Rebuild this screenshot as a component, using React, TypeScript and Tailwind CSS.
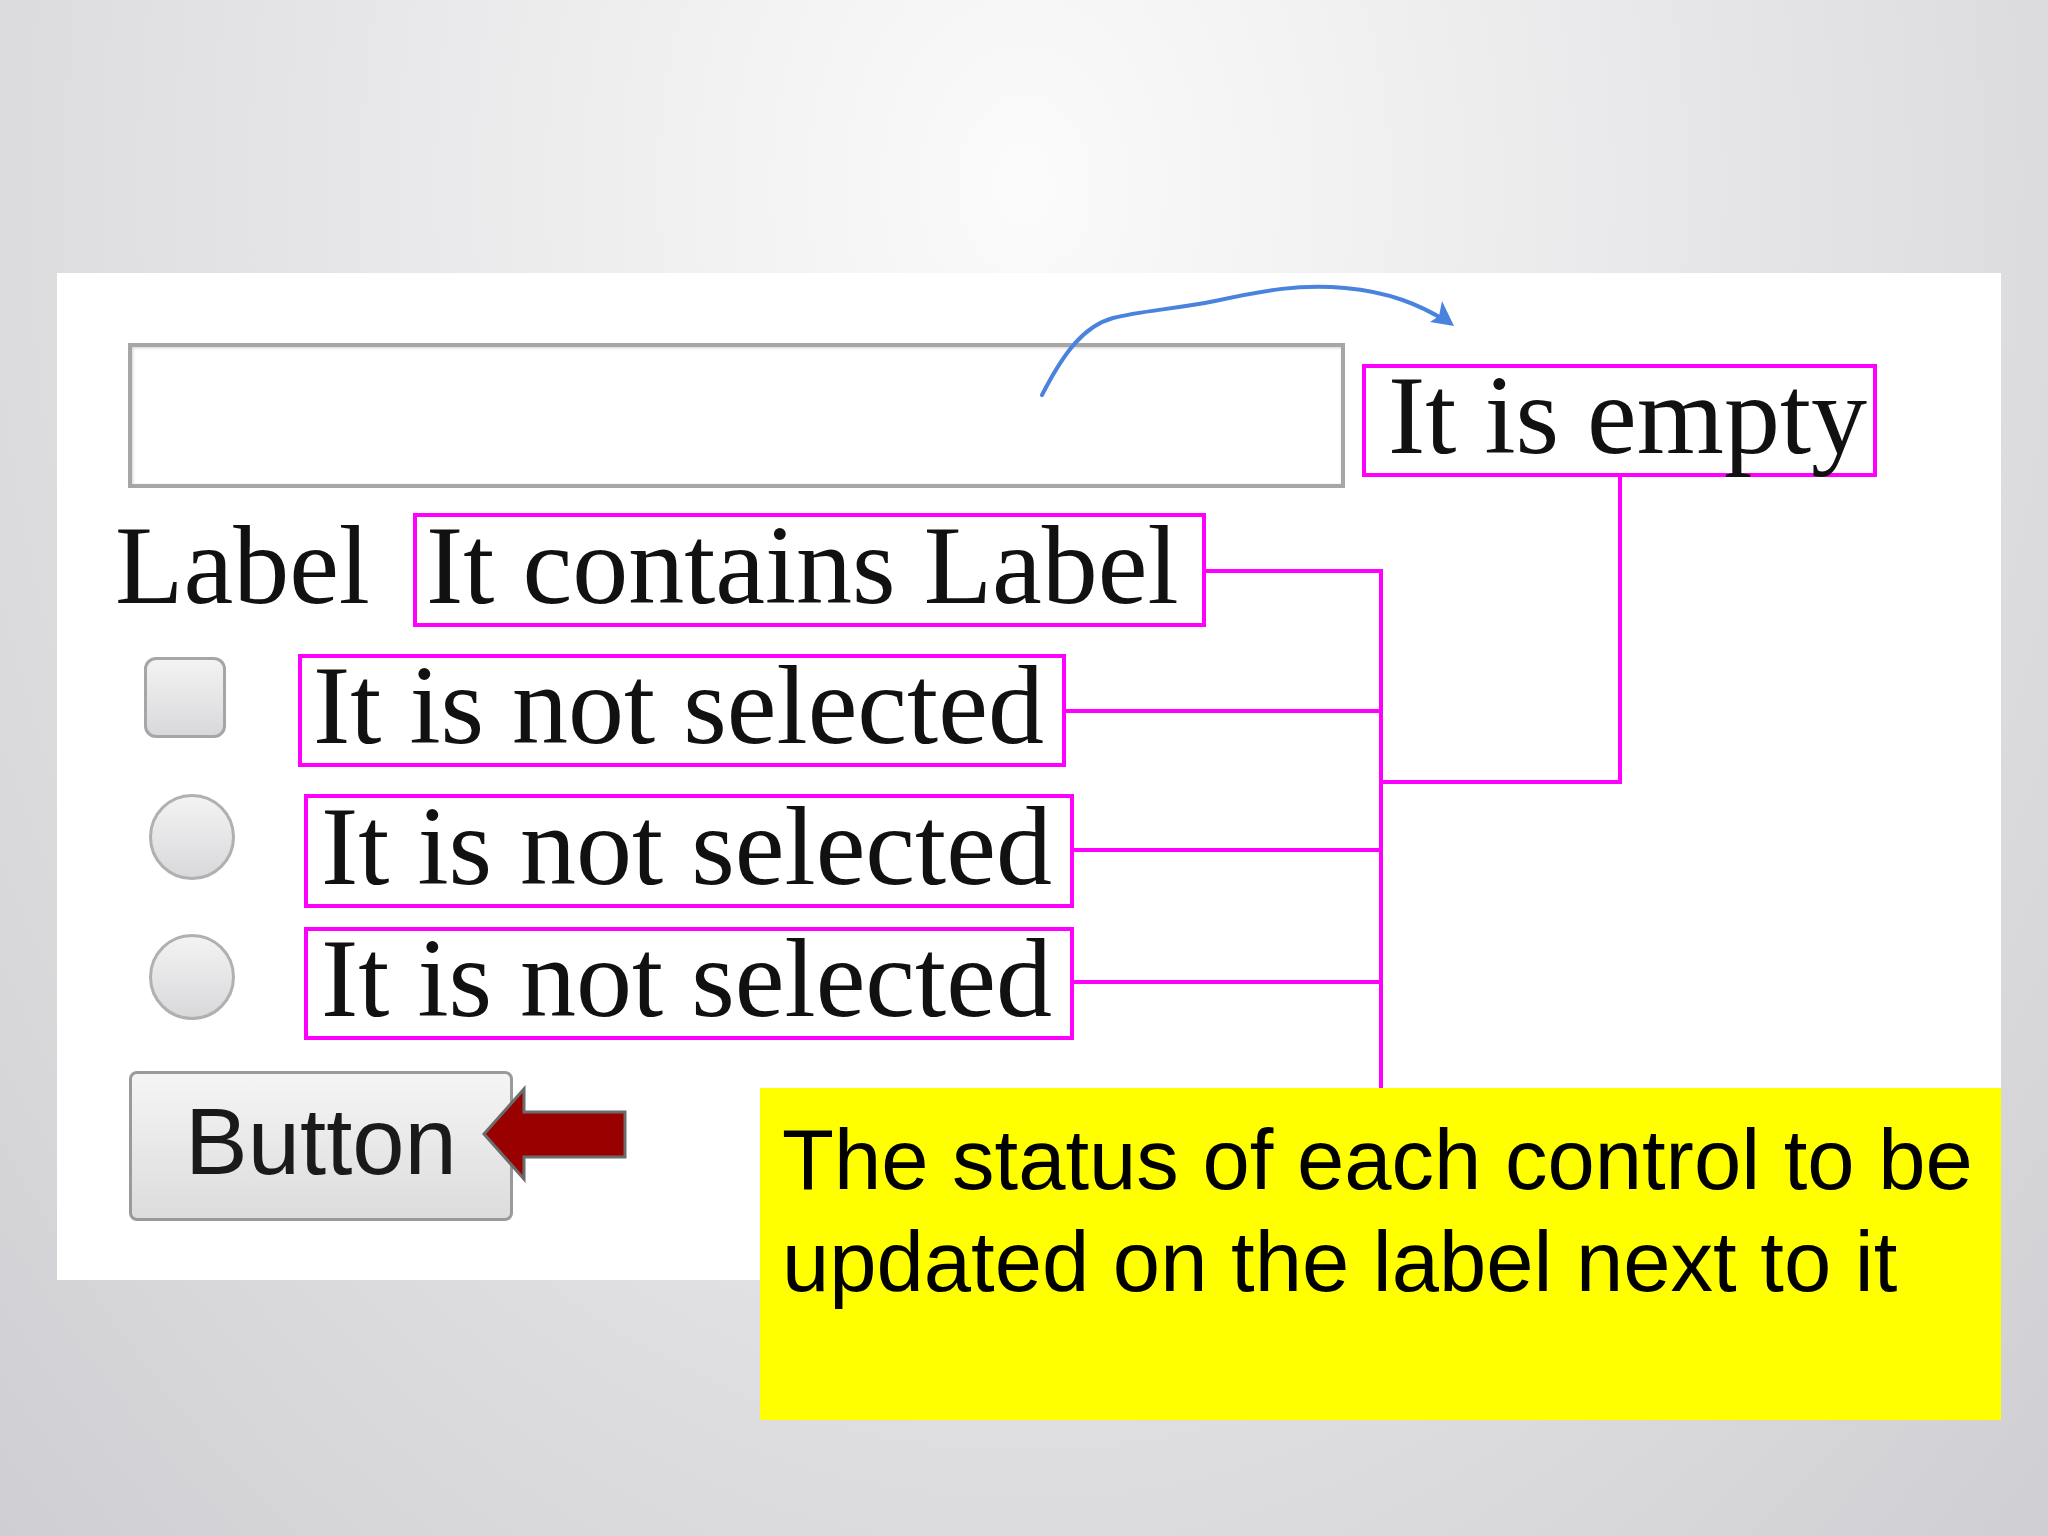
const serif = "font-['Liberation_Serif','Times_New_Roman',serif]"
const sans = "font-['Liberation_Sans',Arial,sans-serif]"

function StatusBox({ text, className }: { text: string; className: string }) {
  return (
    <div className={`flex shrink-0 items-center border-[4px] border-[#ff00ff] ${className}`}>
      <span className={`${serif} -mt-[10px] whitespace-nowrap text-[112px] leading-[107px] text-[#111]`}>{text}</span>
    </div>
  )
}

function Overlay() {
  return (
    <svg className="pointer-events-none absolute left-0 top-0" width="2048" height="1536" viewBox="0 0 2048 1536">
      <g stroke="#ff00ff" strokeWidth="4" fill="none">
        <path d="M1206 571 H1381 V1088" />
        <path d="M1066 711 H1381" />
        <path d="M1074 850 H1381" />
        <path d="M1074 982 H1381" />
        <path d="M1620 477 V782 H1381" />
      </g>
      <path
        d="M1042 395 C1064 352 1084 326 1113 318 C1140 311 1175 309 1215 301 C1265 290 1300 284 1345 288 C1390 292 1420 305 1446 321"
        stroke="#4a83de"
        strokeWidth="4"
        fill="none"
        strokeLinecap="round"
      />
      <polygon points="1454,326 1430,322 1439,316 1442,301" fill="#4a83de" />
      <polygon
        points="484,1134 524,1089 524,1112 625,1112 625,1157 524,1157 524,1179"
        fill="#990000"
        stroke="#6b6b6b"
        strokeWidth="3"
        strokeLinejoin="miter"
      />
    </svg>
  )
}

export default function App() {
  return (
    <div className="relative h-[1536px] w-[2048px] overflow-hidden bg-[radial-gradient(ellipse_at_50%_12%,#fbfbfb_0%,#e6e6e8_48%,#cfcfd3_100%)]">
      <div className="ml-[57px] mt-[273px] flex h-[1007px] w-[1944px] flex-col bg-white">
        {/* text input + status */}
        <div className="mt-[70px] flex items-start">
          <div className="ml-[71px] h-[145px] w-[1217px] shrink-0 border-[4px] border-[#a6a6a6] bg-white shadow-[inset_1px_1px_3px_rgba(0,0,0,0.18)]" />
          <StatusBox text="It is empty" className="ml-[17px] mt-[21px] h-[113px] w-[515px] pl-[22px]" />
        </div>

        {/* label row */}
        <div className="mt-[25px] flex items-center">
          <span className={`${serif} -mt-[10px] ml-[58px] w-[298px] shrink-0 text-[112px] leading-[107px] text-[#111]`}>Label</span>
          <StatusBox text="It contains Label" className="h-[114px] w-[793px] pl-[9px]" />
        </div>

        {/* checkbox */}
        <div className="mt-[27px] flex items-start">
          <div className="ml-[87px] mt-[3px] h-[81px] w-[82px] shrink-0 rounded-[12px] border-[3px] border-[#a6a6a6] bg-gradient-to-b from-[#f3f3f3] to-[#d9d9dc]" />
          <StatusBox text="It is not selected" className="ml-[72px] h-[113px] w-[768px] pl-[11px]" />
        </div>

        {/* radio 1 */}
        <div className="mt-[27px] flex items-start">
          <div className="ml-[92px] h-[86px] w-[86px] shrink-0 rounded-full border-[3px] border-[#b0b0b0] bg-gradient-to-b from-[#f3f3f3] to-[#d9d9dc]" />
          <StatusBox text="It is not selected" className="ml-[69px] h-[114px] w-[770px] pl-[13px]" />
        </div>

        {/* radio 2 */}
        <div className="mt-[19px] flex items-start">
          <div className="ml-[92px] mt-[7px] h-[86px] w-[86px] shrink-0 rounded-full border-[3px] border-[#b0b0b0] bg-gradient-to-b from-[#f3f3f3] to-[#d9d9dc]" />
          <StatusBox text="It is not selected" className="ml-[69px] h-[113px] w-[770px] pl-[13px]" />
        </div>

        {/* button */}
        <div className="mt-[31px] flex">
          <button className={`${sans} ml-[72px] flex h-[150px] w-[384px] items-center justify-center rounded-[8px] border-[3px] border-[#9a9a9a] bg-gradient-to-b from-[#f5f5f5] to-[#dcdcdc] pb-[8px] text-[94px] leading-none text-[#1a1a1a]`}>
            Button
          </button>
        </div>
      </div>

      <Overlay />

      <div className={`${sans} absolute left-[760px] top-[1088px] h-[332px] w-[1241px] bg-[#ffff00] pl-[22px] pt-[21px] text-[85px] leading-[102px] text-black`}>
        The status of each control to be
        <br />
        updated on the label next to it
      </div>
    </div>
  )
}
